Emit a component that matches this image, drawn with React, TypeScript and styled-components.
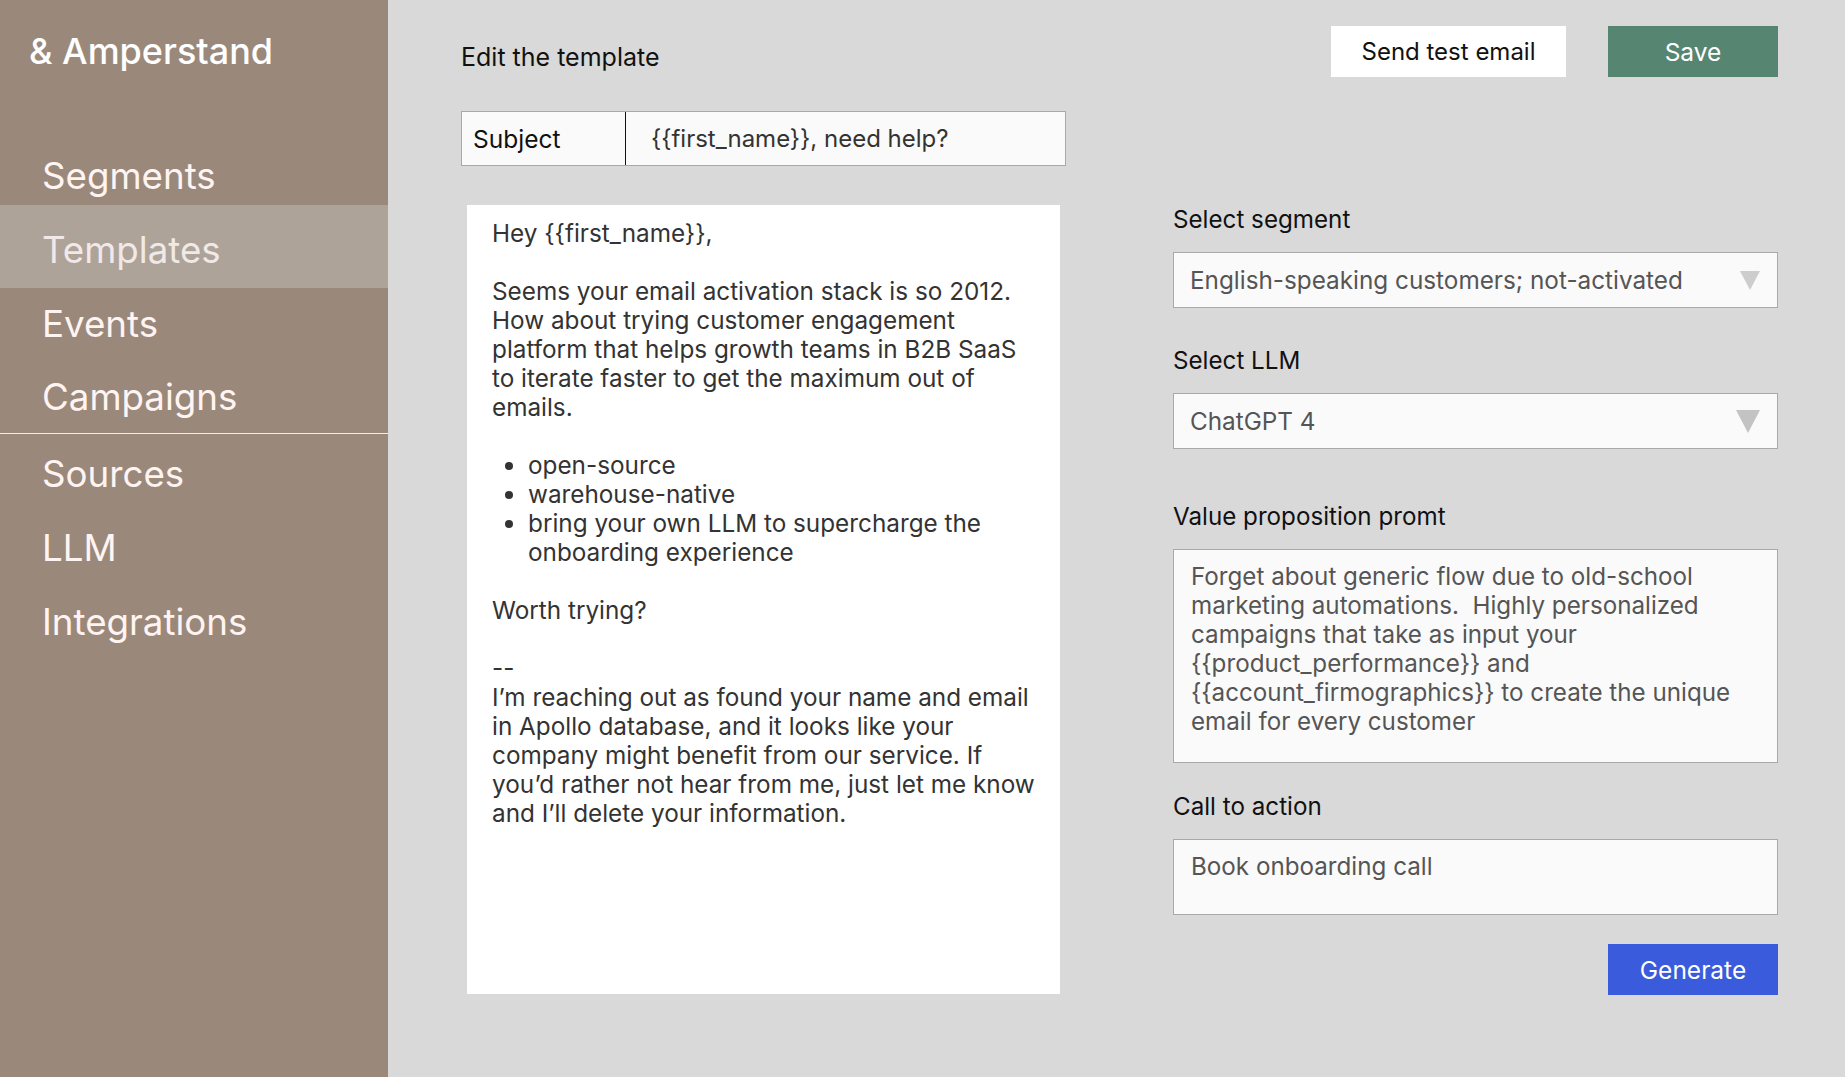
import styled, { createGlobalStyle } from "styled-components";

const GlobalStyle = createGlobalStyle`
  * { box-sizing: border-box; }
  html, body { margin: 0; padding: 0; }
  body {
    font-family: Inter, "Noto Sans", "Liberation Sans", sans-serif;
    background: #d9d9d9;
  }
`;

const Page = styled.div`
  display: flex;
  width: 1845px;
  height: 1077px;
`;

const Sidebar = styled.aside`
  width: 388px;
  flex-shrink: 0;
  background: #9a897b;
  display: flex;
  flex-direction: column;
  padding-top: 29px;
`;

const Logo = styled.div`
  color: #ffffff;
  font-size: 36px;
  font-weight: 500;
  padding-left: 29px;
  height: 109px;
  line-height: 44px;
`;

const NavList = styled.nav`
  display: flex;
  flex-direction: column;
`;

const NavItem = styled.a<{ $active?: boolean; $divider?: boolean }>`
  display: flex;
  align-items: center;
  height: ${(p) => (p.$active ? "83px" : "74px")};
  margin: ${(p) => (p.$active ? "-7px 0 -2px" : p.$divider ? "0 0 2px" : "0")};
  padding: ${(p) => (p.$active ? "5px 0 0 42px" : "0 0 0 42px")};
  font-size: 36.7px;
  color: ${(p) => (p.$active ? "#f1e9e8" : "#fff4f2")};
  background: ${(p) => (p.$active ? "#ada399" : "transparent")};
  border-bottom: ${(p) => (p.$divider ? "1px solid #f4ece8" : "none")};
  cursor: pointer;
`;

const Main = styled.main`
  flex: 1;
  display: flex;
  flex-direction: column;
  padding: 26px 68px 0 73px;
`;

const Header = styled.header`
  display: flex;
  justify-content: space-between;
  align-items: flex-start;
`;

const Title = styled.h1`
  margin: 16px 0 0;
  font-size: 25px;
  line-height: 30px;
  font-weight: 400;
  color: #111;
`;

const Actions = styled.div`
  display: flex;
  gap: 42px;
`;

const Button = styled.button<{ $variant: "light" | "save" | "primary"; $width: number }>`
  width: ${(p) => p.$width}px;
  height: 51px;
  border: none;
  font-family: inherit;
  font-size: ${(p) => (p.$variant === "light" ? "24px" : "24.5px")};
  cursor: pointer;
  background: ${(p) =>
    p.$variant === "light" ? "#ffffff" : p.$variant === "save" ? "#568672" : "#3a5bdb"};
  color: ${(p) => (p.$variant === "light" ? "#111" : "#ffffff")};
`;

const SubjectRow = styled.div`
  margin-top: 34px;
  width: 605px;
  height: 55px;
  display: flex;
  border: 1px solid #a9a9a9;
  background: #fafafa;
`;

const SubjectLabel = styled.div`
  width: 164px;
  display: flex;
  align-items: center;
  padding-left: 11px;
  font-size: 24.5px;
  color: #111;
  border-right: 1px solid #111;
`;

const SubjectValue = styled.div`
  flex: 1;
  display: flex;
  align-items: center;
  padding-left: 25px;
  font-size: 24px;
  color: #333;
`;

const Workspace = styled.div`
  margin-top: 39px;
  display: flex;
  align-items: flex-start;
`;

const EmailBody = styled.div`
  margin-left: 6px;
  width: 593px;
  height: 789px;
  background: #ffffff;
  padding: 14px 23px 0 25px;
  font-size: 24.3px;
  line-height: 29px;
  color: #333;

  p {
    margin: 0 0 29px;
  }

  ul {
    margin: 0 0 29px;
    padding-left: 36px;
  }
`;

const Form = styled.div`
  margin-left: 113px;
  width: 605px;
  display: flex;
  flex-direction: column;
`;

const Field = styled.div<{ $after: number }>`
  display: flex;
  flex-direction: column;
  gap: 18px;
  margin-bottom: ${(p) => p.$after}px;
`;

const Label = styled.label`
  font-size: 24.2px;
  line-height: 29px;
  color: #111;
`;

const SelectBox = styled.div`
  height: 56px;
  display: flex;
  align-items: center;
  justify-content: space-between;
  padding: 0 17px 0 16px;
  border: 1px solid #a9a9a9;
  background: #fafafa;
  font-size: 24.3px;
  color: #555;
`;

const Caret = styled.svg`
  flex-shrink: 0;
`;

const TextBox = styled.div<{ $height: number }>`
  height: ${(p) => p.$height}px;
  padding: 12px 30px 0 17px;
  border: 1px solid #a9a9a9;
  background: #fafafa;
  font-size: 24.2px;
  line-height: 29px;
  color: #555;
`;

const GenerateRow = styled.div`
  display: flex;
  justify-content: flex-end;
`;

const navItems = [
  "Segments",
  "Templates",
  "Events",
  "Campaigns",
  "Sources",
  "LLM",
  "Integrations",
];

function Select({
  value,
  caretW,
  caretH,
  caretColor,
}: {
  value: string;
  caretW: number;
  caretH: number;
  caretColor: string;
}) {
  return (
    <SelectBox>
      <span>{value}</span>
      <Caret width={caretW} height={caretH} viewBox={`0 0 ${caretW} ${caretH}`}>
        <path d={`M0 0 L${caretW} 0 L${caretW / 2} ${caretH} Z`} fill={caretColor} />
      </Caret>
    </SelectBox>
  );
}

export default function App() {
  return (
    <>
      <GlobalStyle />
      <Page>
        <Sidebar>
          <Logo>&amp; Amperstand</Logo>
          <NavList>
            {navItems.map((item) => (
              <NavItem
                key={item}
                $active={item === "Templates"}
                $divider={item === "Campaigns"}
              >
                {item}
              </NavItem>
            ))}
          </NavList>
        </Sidebar>
        <Main>
          <Header>
            <Title>Edit the template</Title>
            <Actions>
              <Button $variant="light" $width={235}>
                Send test email
              </Button>
              <Button $variant="save" $width={170}>
                Save
              </Button>
            </Actions>
          </Header>
          <SubjectRow>
            <SubjectLabel>Subject</SubjectLabel>
            <SubjectValue>{"{{first_name}}, need help?"}</SubjectValue>
          </SubjectRow>
          <Workspace>
            <EmailBody>
              <p>{"Hey {{first_name}},"}</p>
              <p>
                Seems your email activation stack is so 2012. How about trying
                customer engagement platform that helps growth teams in B2B
                SaaS to iterate faster to get the maximum out of emails.
              </p>
              <ul>
                <li>open-source</li>
                <li>warehouse-native</li>
                <li>bring your own LLM to supercharge the onboarding experience</li>
              </ul>
              <p>Worth trying?</p>
              <p>
                --
                <br />
                I’m reaching out as found your name and email in Apollo
                database, and it looks like your company might benefit from our
                service. If you’d rather not hear from me, just let me know and
                I’ll delete your information.
              </p>
            </EmailBody>
            <Form>
              <Field $after={38}>
                <Label>Select segment</Label>
                <Select
                  value="English-speaking customers; not-activated"
                  caretW={20}
                  caretH={19}
                  caretColor="#cdcdcd"
                />
              </Field>
              <Field $after={53}>
                <Label>Select LLM</Label>
                <Select value="ChatGPT 4" caretW={24} caretH={23} caretColor="#c3c3c3" />
              </Field>
              <Field $after={29}>
                <Label>Value proposition promt</Label>
                <TextBox $height={214}>
                  {"Forget about generic flow due to old-school marketing automations.\u00a0 Highly personalized campaigns that take as input your {{product_performance}} and {{account_firmographics}} to create the unique email for every customer"}
                </TextBox>
              </Field>
              <Field $after={29}>
                <Label>Call to action</Label>
                <TextBox $height={76}>Book onboarding call</TextBox>
              </Field>
              <GenerateRow>
                <Button $variant="primary" $width={170}>
                  Generate
                </Button>
              </GenerateRow>
            </Form>
          </Workspace>
        </Main>
      </Page>
    </>
  );
}
